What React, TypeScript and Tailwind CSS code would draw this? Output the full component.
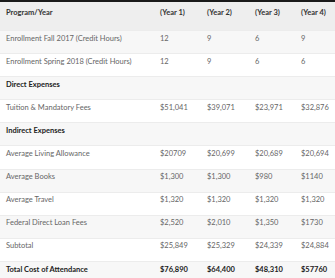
import React from "react";

type Row = { label: string; vals: string[]; kind?: "section" | "total" };

const rows: Row[] = [
  { label: "Enrollment Fall 2017 (Credit Hours)", vals: ["12", "9", "6", "9"] },
  { label: "Enrollment Spring 2018 (Credit Hours)", vals: ["12", "9", "6", "6"] },
  { label: "Direct Expenses", vals: ["", "", "", ""], kind: "section" },
  { label: "Tuition & Mandatory Fees", vals: ["$51,041", "$39,071", "$23,971", "$32,876"] },
  { label: "Indirect Expenses", vals: ["", "", "", ""], kind: "section" },
  { label: "Average Living Allowance", vals: ["$20709", "$20,699", "$20,689", "$20,694"] },
  { label: "Average Books", vals: ["$1,300", "$1,300", "$980", "$1140"] },
  { label: "Average Travel", vals: ["$1,320", "$1,320", "$1,320", "$1,320"] },
  { label: "Federal Direct Loan Fees", vals: ["$2,520", "$2,010", "$1,350", "$1730"] },
  { label: "Subtotal", vals: ["$25,849", "$25,329", "$24,339", "$24,884"] },
  { label: "Total Cost of Attendance", vals: ["$76,890", "$64,400", "$48,310", "$57760"], kind: "total" },
];

const grid = "grid grid-cols-[154px_47px_48px_46px_1fr]";

export default function App() {
  return (
    <div className="w-[335px] h-[278px] overflow-hidden bg-white border-t-2 border-[#1a1a1a] text-[7.5px] leading-none" style={{ fontFamily: "Lato, 'Open Sans', sans-serif" }}>
      <div className={`${grid} h-[28px] items-center pt-[3px] bg-[#eeeeee] font-bold text-[#333333]`}>
        <div className="pl-[6px]">Program/Year</div>
        <div className="pl-[6px]">(Year 1)</div>
        <div className="pl-[6px]">(Year 2)</div>
        <div className="pl-[6px]">(Year 3)</div>
        <div className="pl-[6px]">(Year 4)</div>
        <div />
      </div>
      {rows.map((r, i) => (
        <div
          key={i}
          className={`${grid} h-[23.1px] items-center border-t border-[#ececec] ${i % 2 === 0 ? "bg-[#f7f7f7]" : "bg-white"} ${r.kind ? "font-bold text-[#222222]" : "text-[#666666]"}`}
        >
          <div className="pl-[6px] whitespace-nowrap">{r.label}</div>
          {r.vals.map((v, j) => (
            <div key={j} className="pl-[6px] whitespace-nowrap">{v}</div>
          ))}
          <div />
        </div>
      ))}
    </div>
  );
}
